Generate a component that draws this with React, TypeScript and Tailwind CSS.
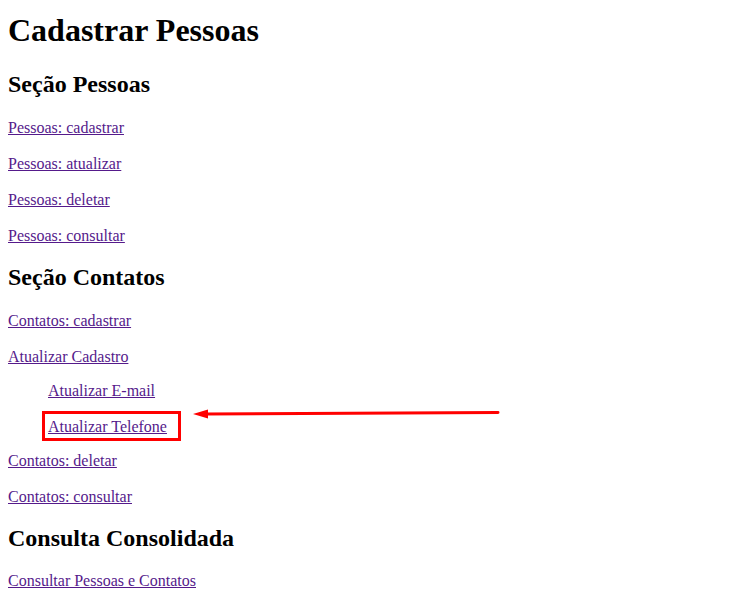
export default function App() {
  const link = "text-[#551a8b] underline";
  return (
    <div className="relative min-h-[597px] w-full bg-white px-2 pt-[12px] text-black font-['Liberation_Serif','Times_New_Roman',serif]">
      <h1 className="text-[32px] font-bold leading-[37px]">Cadastrar Pessoas</h1>

      <h2 className="mt-[21px] text-[24px] font-bold leading-[28px]">Seção Pessoas</h2>
      <p className="mt-[21px] text-[16px] leading-[18px]">
        <a href="#" className={link}>Pessoas: cadastrar</a>
      </p>
      <p className="mt-[18px] text-[16px] leading-[18px]">
        <a href="#" className={link}>Pessoas: atualizar</a>
      </p>
      <p className="mt-[18px] text-[16px] leading-[18px]">
        <a href="#" className={link}>Pessoas: deletar</a>
      </p>
      <p className="mt-[18px] text-[16px] leading-[18px]">
        <a href="#" className={link}>Pessoas: consultar</a>
      </p>

      <h2 className="mt-[18px] text-[24px] font-bold leading-[28px]">Seção Contatos</h2>
      <p className="mt-[21px] text-[16px] leading-[18px]">
        <a href="#" className={link}>Contatos: cadastrar</a>
      </p>
      <p className="mt-[18px] text-[16px] leading-[18px]">
        <a href="#" className={link}>Atualizar Cadastro</a>
      </p>
      <ul className="pl-10">
        <li className="mt-[16px] text-[16px] leading-[18px]">
          <a href="#" className={link}>Atualizar E-mail</a>
        </li>
        <li className="mt-[18px] text-[16px] leading-[18px]">
          <a href="#" className={link}>Atualizar Telefone</a>
        </li>
      </ul>
      <p className="mt-[16px] text-[16px] leading-[18px]">
        <a href="#" className={link}>Contatos: deletar</a>
      </p>
      <p className="mt-[18px] text-[16px] leading-[18px]">
        <a href="#" className={link}>Contatos: consultar</a>
      </p>

      <h2 className="mt-[18px] text-[24px] font-bold leading-[28px]">Consulta Consolidada</h2>
      <p className="mt-[20px] text-[16px] leading-[18px]">
        <a href="#" className={link}>Consultar Pessoas e Contatos</a>
      </p>

      {/* annotation: red box + arrow */}
      <div className="pointer-events-none absolute left-[42px] top-[411px] h-[30px] w-[139px] border-[3px] border-[#ff0000]" />
      <svg
        className="pointer-events-none absolute left-0 top-0"
        width="747"
        height="597"
        viewBox="0 0 747 597"
      >
        <line x1="498" y1="412.5" x2="205" y2="414" stroke="#ff0000" strokeWidth="3" strokeLinecap="round" />
        <polygon points="193,414 208,409.5 208,418.5" fill="#ff0000" />
      </svg>
    </div>
  );
}
